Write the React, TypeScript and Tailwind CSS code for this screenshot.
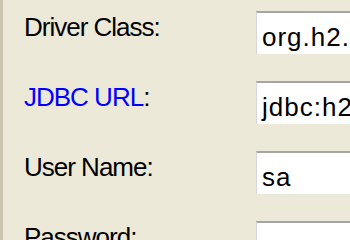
import React from "react";

const rows: { label: string; link?: boolean; value: string }[] = [
  { label: "Driver Class", value: "org.h2.Driver" },
  { label: "JDBC URL", link: true, value: "jdbc:h2:~/test" },
  { label: "User Name", value: "sa" },
  { label: "Password", value: "" },
];

export default function App() {
  return (
    <div
      className="w-[350px] h-[240px] overflow-hidden bg-[#ECE9D8] border-l-[3px] border-[#c9c5b1] flex flex-col"
      style={{ fontFamily: '"Liberation Sans", Arial, sans-serif' }}
    >
      {rows.map((r) => (
        <div key={r.label} className="flex h-[70px] shrink-0">
          <div className="w-[253px] shrink-0 pl-[21px] pt-[12px]">
            <span className="text-[26px] leading-[30px] tracking-[-1px] text-black whitespace-nowrap">
              {r.link ? <span className="text-[#0000ff]">{r.label}</span> : r.label}:
            </span>
          </div>
          <div className="mt-[11px] h-[43px] w-[200px] shrink-0 bg-white border-t-2 border-l border-t-[#a5a5a8] border-l-[#d6d6dc] pl-[5px] pt-[9px] overflow-hidden">
            <span className="text-[26px] leading-[30px] tracking-[1px] text-black whitespace-nowrap">
              {r.value}
            </span>
          </div>
        </div>
      ))}
    </div>
  );
}
